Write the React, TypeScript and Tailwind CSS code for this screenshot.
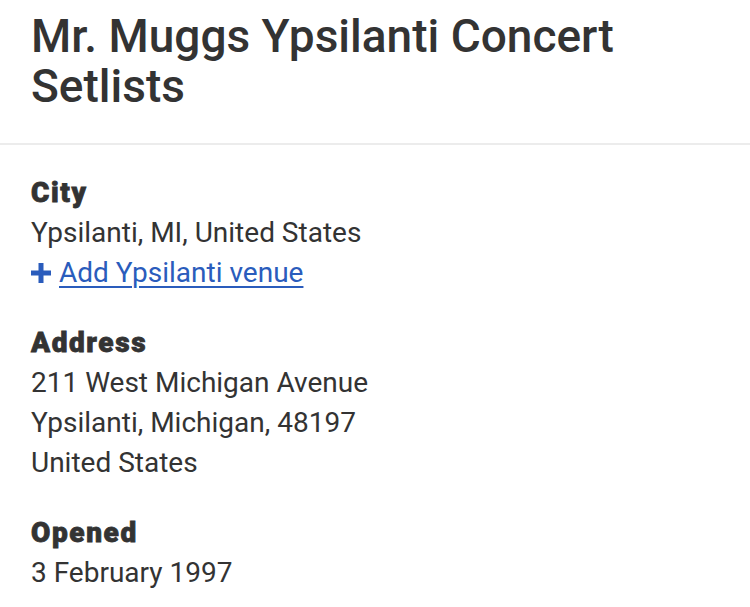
export default function App() {
  return (
    <div className="min-h-screen bg-white text-[#333] font-['Roboto',sans-serif]">
      <header className="border-b-2 border-[#ececec] px-[31px] pt-[11px] pb-[32px]">
        <h1 className="text-[46px] leading-[50px] font-medium">
          Mr. Muggs Ypsilanti Concert Setlists
        </h1>
      </header>
      <div className="px-[31px] pt-[28px] flex flex-col gap-[30px] text-[28px] leading-[40px]">
        <section>
          <h2 className="font-black tracking-[1.6px] [-webkit-text-stroke:0.8px_#333]">City</h2>
          <p>Ypsilanti, MI, United States</p>
          <a href="#" className="flex items-center gap-[8px] text-[#2a5cbc]">
            <svg width="20" height="20" viewBox="0 0 20 20" className="shrink-0">
              <path d="M7.5 0h5v7.5H20v5h-7.5V20h-5v-7.5H0v-5h7.5z" fill="currentColor" />
            </svg>
            <span className="underline underline-offset-[4px] decoration-[2px]">Add Ypsilanti venue</span>
          </a>
        </section>
        <section>
          <h2 className="font-black tracking-[1.6px] [-webkit-text-stroke:0.8px_#333]">Address</h2>
          <p>211 West Michigan Avenue</p>
          <p>Ypsilanti, Michigan, 48197</p>
          <p>United States</p>
        </section>
        <section>
          <h2 className="font-black tracking-[1.6px] [-webkit-text-stroke:0.8px_#333]">Opened</h2>
          <p>3 February 1997</p>
        </section>
      </div>
    </div>
  );
}
